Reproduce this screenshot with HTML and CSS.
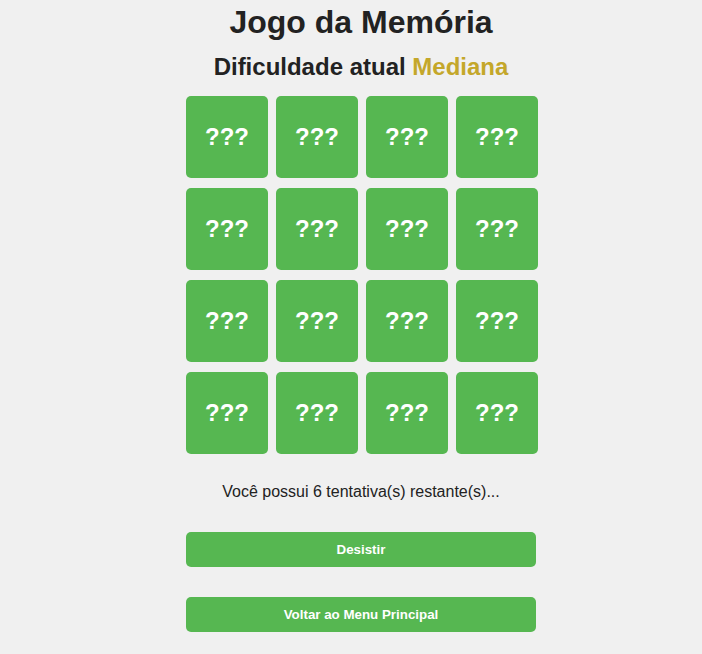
FILE: index.html
```html
<!DOCTYPE html>
<html lang="pt">
<head>
<meta charset="utf-8">
<title>Jogo da Memória</title>
<link rel="stylesheet" href="styles.css">
</head>
<body>
<main class="game">
  <h1 class="title">Jogo da Memória</h1>
  <h2 class="subtitle">Dificuldade atual <span class="level">Mediana</span></h2>
  <div class="board">
    <div class="card">???</div><div class="card">???</div><div class="card">???</div><div class="card">???</div>
    <div class="card">???</div><div class="card">???</div><div class="card">???</div><div class="card">???</div>
    <div class="card">???</div><div class="card">???</div><div class="card">???</div><div class="card">???</div>
    <div class="card">???</div><div class="card">???</div><div class="card">???</div><div class="card">???</div>
  </div>
  <p class="attempts">Você possui 6 tentativa(s) restante(s)...</p>
  <button class="btn btn-quit">Desistir</button>
  <button class="btn btn-menu">Voltar ao Menu Principal</button>
</main>
</body>
</html>
```
FILE: styles.css
```css
html, body {
  margin: 0;
  background: #f0f0f0;
}
body {
  padding: 0 8px 0 28px;
  font-family: "Liberation Sans", Arial, sans-serif;
  color: #222;
}
.game {
  display: flex;
  flex-direction: column;
  align-items: center;
}
.title {
  margin: 4px 0 0;
  font-size: 32px;
  line-height: 37px;
  font-weight: bold;
}
.subtitle {
  margin: 12px 0 0;
  font-size: 24px;
  line-height: 28px;
  font-weight: bold;
}
.level {
  color: #c4a72a;
}
.board {
  margin-top: 15px;
  padding-left: 2px;
  display: grid;
  grid-template-columns: repeat(4, 82px);
  grid-auto-rows: 82px;
  column-gap: 8px;
  row-gap: 10px;
}
.card {
  background: #56b751;
  border-radius: 5px;
  color: #fff;
  font-size: 24px;
  font-weight: bold;
  display: flex;
  align-items: center;
  justify-content: center;
}
.attempts {
  margin: 29px 0 0;
  font-size: 16px;
  line-height: 18px;
}
.btn {
  width: 350px;
  height: 35px;
  border: none;
  border-radius: 5px;
  background: #56b751;
  color: #fff;
  font-family: "Liberation Sans", Arial, sans-serif;
  font-size: 13.333px;
  font-weight: bold;
  padding: 0;
}
.btn-quit {
  margin-top: 31px;
}
.btn-menu {
  margin-top: 30px;
}
```
